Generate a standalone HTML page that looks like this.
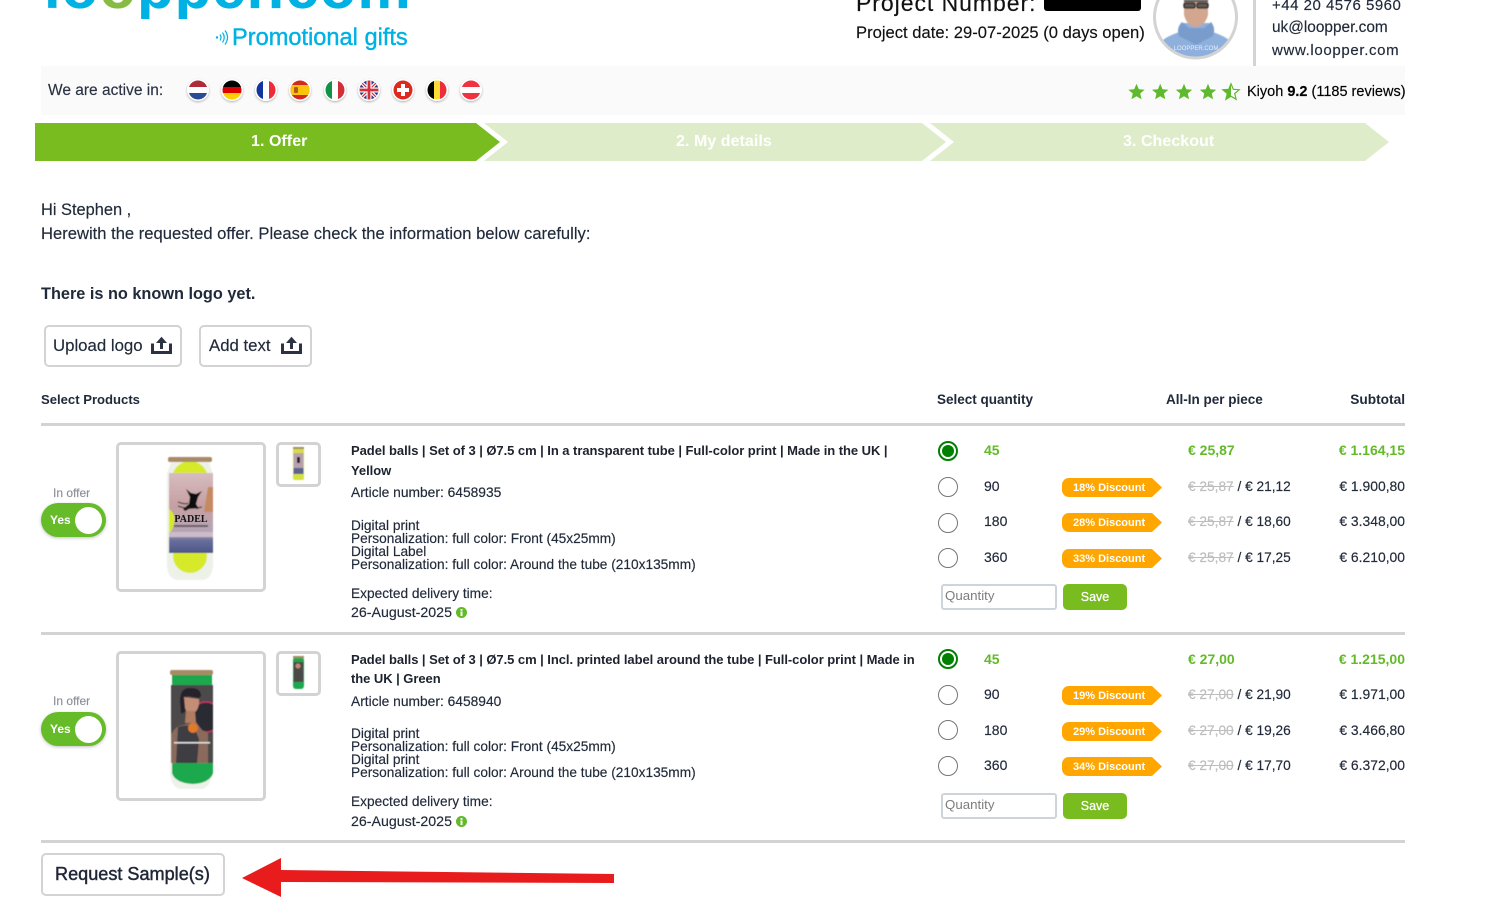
<!DOCTYPE html>
<html lang="en"><head><meta charset="utf-8"><title>Offer</title>
<style>
html,body{margin:0;padding:0;background:#fff;width:1503px;height:902px;overflow:hidden}
body{position:relative;font-family:"Liberation Sans",sans-serif;color:#212a3a;font-size:14px}
.t{position:absolute;white-space:nowrap;line-height:18px;-webkit-text-stroke:.15px currentColor}
.b{font-weight:700;-webkit-text-stroke:0}.r{text-align:right}
.box{position:absolute;box-sizing:border-box;border:3px solid #d3d3d3;border-radius:5px;background:#fff}
.hr{position:absolute;left:41px;width:1364px;height:3px;background:#d3d3d3}
.radio{position:absolute;left:938px;width:20px;height:20px;box-sizing:border-box;border:1.5px solid #767676;border-radius:50%;background:#fff}
.radio.on{border:2px solid #008000}
.radio.on:after{content:"";position:absolute;left:2px;top:2px;width:12px;height:12px;border-radius:50%;background:#008000}
.badge{position:absolute;left:1062px;width:100px;height:19px;background:#ffa600;color:#fff;font-weight:700;font-size:11px;line-height:20px;text-indent:11px;border-radius:7px 0 0 7px;clip-path:polygon(0 0,90% 0,100% 50%,90% 100%,0 100%)}
.green{color:#62ba29;font-weight:700;font-size:14px;-webkit-text-stroke:0}
.p{font-size:13.700px}
.old{color:#bdbdbd;text-decoration:line-through}
.q{position:absolute;left:941px;width:116px;height:26px;box-sizing:border-box;border:2px solid #ced4da;border-radius:3px;background:#fff;color:#7d7d7d;font-size:13.300px;line-height:20px;padding-left:2px}
.save{position:absolute;left:1063px;width:64px;height:26px;background:#78bc20;border-radius:5px;color:#fff;font-size:12.500px;-webkit-text-stroke:.25px #fff;line-height:26px;text-align:center}
.tog{position:absolute;left:41px;width:65px;height:34px;background:#66bb29;border-radius:17px;box-shadow:0 1px 3px rgba(0,0,0,.25)}
.tog:after{content:"";position:absolute;left:34px;top:4px;width:27px;height:27px;background:#fff;border-radius:50%}
.tog span{position:absolute;left:9px;top:8px;color:#fff;font-size:12px;font-weight:700;line-height:18px}
.step{font-size:16px;color:#fff;letter-spacing:.05px;top:133px}
.ti{font-size:13px;color:#1c222e;letter-spacing:-.05px}
svg{position:absolute;overflow:visible}
</style></head><body>

<!-- logo -->
<div class="t" style="left:44px;top:-42px;font-size:60px;line-height:60px;font-weight:700;color:#00b2e3;letter-spacing:1px">lo<span style="color:#86bc42">o</span>pper.com</div>
<div style="position:absolute;left:0;top:19px;width:520px;height:47px;background:#fff"></div>
<div class="t" style="left:232px;top:25px;font-size:23.600px;line-height:26px;color:#00b2e3;-webkit-text-stroke:.4px #00b2e3">Promotional gifts</div>
<svg style="left:215px;top:29px" width="14" height="17" fill="none" stroke="#00b2e3" stroke-width="1.2"><circle cx="2" cy="8.500" r="1.200" fill="#00b2e3" stroke="none"/><path d="M5 5.500q2 3 0 6M7.500 3.500q3.500 5 0 10M10 1.500q5 7 0 14"/></svg>

<!-- header right -->
<div class="t" style="left:856px;top:-8px;font-size:23px;line-height:22px;color:#111;letter-spacing:.95px">Project Number:</div>
<div style="position:absolute;left:1044px;top:0;width:97px;height:11px;background:#000;border-radius:0 0 3px 3px"></div>
<div class="t" style="left:856px;top:23px;font-size:16.600px;line-height:20px;color:#111">Project date: 29-07-2025 (0 days open)</div>
<svg style="left:1153px;top:0" width="86" height="60">
<defs><clipPath id="av"><circle cx="42.500" cy="17" r="40"/></clipPath><filter id="bl"><feGaussianBlur stdDeviation=".5"/></filter></defs>
<g clip-path="url(#av)"><rect width="86" height="60" fill="#fff"/>
<g filter="url(#bl)">
<path d="M6 60V44q6-8 24-13l0-8h26l0 8q18 5 24 13V60z" fill="#8fb0dc"/>
<path d="M26 36q-3-8 3-14l7 6h15l7-6q5 6 2 14l-17 9z" fill="#7a9ccc"/>
<path d="M31 0h24v15q-3 11-12 12-9-1-12-12z" fill="#d3a68f"/>
<rect x="31" y="0" width="24" height="2" fill="#555"/>
<rect x="31" y="3" width="11" height="5" rx="1.500" fill="#5f5a55" stroke="#222" stroke-width="1.300"/><rect x="44" y="3" width="11" height="5" rx="1.500" fill="#5f5a55" stroke="#222" stroke-width="1.300"/>
</g>
<text x="43" y="50" font-size="6" fill="#e6eef8" text-anchor="middle">LOOPPER.COM</text>
</g>
<circle cx="42.500" cy="17" r="41" fill="none" stroke="#d3d3d3" stroke-width="3"/></svg>
<div style="position:absolute;left:1253px;top:0;width:3px;height:66px;background:#d3d3d3"></div>
<div class="t" style="left:1272px;top:-3px;font-size:15px;line-height:18px;letter-spacing:.5px">+44 20 4576 5960</div>
<div class="t" style="left:1272px;top:19px;font-size:15.400px;line-height:18px">uk@loopper.com</div>
<div class="t" style="left:1272px;top:42px;font-size:15px;line-height:18px;letter-spacing:.65px">www.loopper.com</div>

<!-- active bar -->
<div style="position:absolute;left:41px;top:66px;width:1364px;height:49px;background:#fafafa"></div>
<div class="t" style="left:48px;top:82px;font-size:15.500px;color:#2a3242">We are active in:</div>
<svg style="left:0;top:0" width="500" height="120">
<defs><clipPath id="fc"><circle r="9.500"/></clipPath><filter id="fs" x="-30%" y="-30%" width="160%" height="160%"><feDropShadow dx="0" dy="1" stdDeviation="1" flood-opacity=".3"/></filter></defs>
<g transform="translate(198 90)"><circle r="11" fill="#fff" filter="url(#fs)"/><g clip-path="url(#fc)"><rect x="-10" y="-10" width="20" height="7" fill="#ae2c3a"/><rect x="-10" y="-3" width="20" height="6" fill="#fff"/><rect x="-10" y="3" width="20" height="7" fill="#2a4c94"/></g></g>
<g transform="translate(232 90)"><circle r="11" fill="#fff" filter="url(#fs)"/><g clip-path="url(#fc)"><rect x="-10" y="-10" width="20" height="7" fill="#000"/><rect x="-10" y="-3" width="20" height="6" fill="#dd0000"/><rect x="-10" y="3" width="20" height="7" fill="#ffce00"/></g></g>
<g transform="translate(266 90)"><circle r="11" fill="#fff" filter="url(#fs)"/><g clip-path="url(#fc)"><rect x="-10" y="-10" width="7" height="20" fill="#14359c"/><rect x="-3" y="-10" width="6" height="20" fill="#fff"/><rect x="3" y="-10" width="7" height="20" fill="#ef2b3a"/></g></g>
<g transform="translate(300 90)"><circle r="11" fill="#fff" filter="url(#fs)"/><g clip-path="url(#fc)"><rect x="-10" y="-10" width="20" height="20" fill="#d5281c"/><rect x="-10" y="-5" width="20" height="10" fill="#fcc30b"/><rect x="-6" y="-3" width="4" height="6" rx="1" fill="#b5561f"/></g></g>
<g transform="translate(335 90)"><circle r="11" fill="#fff" filter="url(#fs)"/><g clip-path="url(#fc)"><rect x="-10" y="-10" width="7" height="20" fill="#0f9447"/><rect x="-3" y="-10" width="6" height="20" fill="#fff"/><rect x="3" y="-10" width="7" height="20" fill="#d12f38"/></g></g>
<g transform="translate(369 90)"><circle r="11" fill="#fff" filter="url(#fs)"/><g clip-path="url(#fc)"><rect x="-10" y="-10" width="20" height="20" fill="#2b3c86"/><path d="M-10-10L10 10M10-10L-10 10" stroke="#fff" stroke-width="3.500"/><path d="M-10-10L10 10M10-10L-10 10" stroke="#d2303d" stroke-width="1.200"/><path d="M0-10V10M-10 0H10" stroke="#fff" stroke-width="5"/><path d="M0-10V10M-10 0H10" stroke="#d2303d" stroke-width="2.800"/></g></g>
<g transform="translate(403 90)"><circle r="11" fill="#fff" filter="url(#fs)"/><g clip-path="url(#fc)"><rect x="-10" y="-10" width="20" height="20" fill="#dc2a20"/><path d="M-2-6H2V-2H6V2H2V6H-2V2H-6V-2H-2z" fill="#fff"/></g></g>
<g transform="translate(437 90)"><circle r="11" fill="#fff" filter="url(#fs)"/><g clip-path="url(#fc)"><rect x="-10" y="-10" width="7" height="20" fill="#000"/><rect x="-3" y="-10" width="6" height="20" fill="#fbdc36"/><rect x="3" y="-10" width="7" height="20" fill="#ee2d3a"/></g></g>
<g transform="translate(471 90)"><circle r="11" fill="#fff" filter="url(#fs)"/><g clip-path="url(#fc)"><rect x="-10" y="-10" width="20" height="7" fill="#ef3340"/><rect x="-10" y="-3" width="20" height="6" fill="#fff"/><rect x="-10" y="3" width="20" height="7" fill="#ef3340"/></g></g>
</svg>
<svg style="left:1125px;top:82px" width="120" height="20">
<defs><path id="st" d="M0-8.200L2.300-2.700 8.200-2.300 3.700 1.500 5.100 7.300 0 4.200-5.100 7.300-3.700 1.500-8.200-2.300-2.300-2.700z"/></defs>
<use href="#st" x="11.500" y="10" fill="#5fb92c"/><use href="#st" x="35.200" y="10" fill="#5fb92c"/><use href="#st" x="59" y="10" fill="#5fb92c"/><use href="#st" x="83" y="10" fill="#5fb92c"/>
<use href="#st" x="106" y="10" fill="#fff" stroke="#5fb92c" stroke-width="1.200"/><path d="M106 1.800L103.700 7.300 97.800 7.700 102.300 11.500 100.900 17.300 106 14.200z" fill="#5fb92c"/></svg>
<div class="t" style="left:1247px;top:83px;font-size:14.500px;color:#000">Kiyoh <b>9.2</b> (1185 reviews)</div>

<!-- steps -->
<svg style="left:0;top:0" width="1503" height="170">
<polygon points="35,123 476,123 500,142 476,161 35,161" fill="#78bc20"/>
<polygon points="484,123 922,123 946,142 922,161 484,161 508,142" fill="#dfecc9"/>
<polygon points="930,123 1365,123 1389,142 1365,161 930,161 954,142" fill="#dfecc9"/>
</svg>
<div class="t b step" style="left:251px">1. Offer</div>
<div class="t b step" style="left:676px">2. My details</div>
<div class="t b step" style="left:1123px">3. Checkout</div>

<!-- intro -->
<div class="t" style="left:41px;top:201px;font-size:16.400px">Hi Stephen ,</div>
<div class="t" style="left:41px;top:225px;font-size:16.600px">Herewith the requested offer. Please check the information below carefully:</div>
<div class="t b" style="left:41px;top:285px;font-size:16.300px">There is no known logo yet.</div>

<!-- buttons -->
<div class="box" style="left:44px;top:325px;width:138px;height:42px;border-width:2px"></div>
<div class="t" style="left:53px;top:337px;font-size:16.800px">Upload logo</div>
<svg style="left:150px;top:336px" width="24" height="20"><path d="M2.500 7.500V16.500H20.500V7.500M11.500 6V13" fill="none" stroke="#2b3243" stroke-width="3"/><polygon points="6,7 11.500,.7 17,7" fill="#2b3243"/></svg>
<div class="box" style="left:199px;top:325px;width:113px;height:42px;border-width:2px"></div>
<div class="t" style="left:209px;top:337px;font-size:16.800px">Add text</div>
<svg style="left:280px;top:336px" width="24" height="20"><path d="M2.500 7.500V16.500H20.500V7.500M11.500 6V13" fill="none" stroke="#2b3243" stroke-width="3"/><polygon points="6,7 11.500,.7 17,7" fill="#2b3243"/></svg>

<!-- table head -->
<div class="t b" style="left:41px;top:391px;font-size:13.100px">Select Products</div>
<div class="t b" style="left:937px;top:391px;font-size:13.500px">Select quantity</div>
<div class="t b" style="left:1166px;top:391px;font-size:13.500px">All-In per piece</div>
<div class="t b r" style="right:98px;top:391px;font-size:13.700px">Subtotal</div>
<div class="hr" style="top:423px"></div>

<!-- product 1 -->
<div class="t" style="left:53px;top:484px;font-size:12px;color:#8a8f98">In offer</div>
<div class="tog" style="top:503px"><span>Yes</span></div>
<div class="box" style="left:116px;top:442px;width:150px;height:150px"></div>
<svg style="left:116px;top:442px" width="150" height="150">
<defs><linearGradient id="p1" x1="0" y1="0" x2="0" y2="1"><stop offset="0" stop-color="#d6bcc0"/><stop offset=".4" stop-color="#c6a0a2"/><stop offset=".76" stop-color="#b3a5b8"/><stop offset=".84" stop-color="#6a6f9c"/><stop offset="1" stop-color="#4d5588"/></linearGradient>
<filter id="b2"><feGaussianBlur stdDeviation=".5"/></filter></defs>
<g filter="url(#b2)">
<path d="M55 20h38l4 12v90q0 14-10 16h-26q-10-2-10-16V32z" fill="#eef1e8"/>
<circle cx="74" cy="37" r="18" fill="#d6ea2a"/><circle cx="74" cy="114" r="17" fill="#d6ea2a"/>
<rect x="52" y="15" width="44" height="5" rx="2" fill="#a88a66"/>
<rect x="53" y="31" width="44" height="80" fill="url(#p1)"/>
<path d="M92 45h5v25h-9z" fill="#c68a62"/>
<path d="M53 67q7 5 5 14-2 9-5 10z" fill="#d6ea2a"/>
<path d="M70 47l5 4 5 1 6-3-4 6-2 7 3 5-8-1-6 3-2-2 6-5 1-7z" fill="#111"/>
<path d="M62 64q10 4 24 1M62 60q8 3 10 1" stroke="#222" fill="none" stroke-width="1"/>
<rect x="58" y="83" width="34" height="2" fill="#6c5a66"/>
<rect x="53" y="90" width="44" height="5" fill="#cdbcc8"/>
</g>
<text x="75" y="80" font-size="10" font-weight="700" font-family="Liberation Serif,serif" text-anchor="middle" fill="#111">PADEL</text>
</svg>
<div class="box" style="left:276px;top:442px;width:45px;height:45px"></div>
<svg style="left:276px;top:442px" width="45" height="45"><g filter="url(#b2)"><rect x="17" y="6" width="11" height="32" rx="2" fill="#d4e03c"/><rect x="17.500" y="11" width="10" height="21" fill="#b9a0ae"/><rect x="17.500" y="26" width="10" height="6" fill="#5b6391"/><rect x="17" y="5" width="11" height="2" fill="#a88a66"/><rect x="21" y="15" width="3" height="6" fill="#222"/></g></svg>

<div class="t b ti" style="left:351px;top:442px">Padel balls | Set of 3 | Ø7.5 cm | In a transparent tube | Full-color print | Made in the UK |</div>
<div class="t b ti" style="left:351px;top:462px">Yellow</div>
<div class="t" style="left:351px;top:484px;font-size:13.800px">Article number: 6458935</div>
<div class="t" style="left:351px;top:519px;font-size:13.700px;line-height:13px">Digital print<br>Personalization: full color: Front (45x25mm)<br>Digital Label<br>Personalization: full color: Around the tube (210x135mm)</div>
<div class="t" style="left:351px;top:585px;font-size:13.700px">Expected delivery time:</div>
<div class="t" style="left:351px;top:604px;font-size:14.200px">26-August-2025</div>
<svg style="left:456px;top:607px" width="11" height="11"><circle cx="5.500" cy="5.500" r="5.500" fill="#62ba29"/><rect x="4.500" y="4.500" width="2" height="4.500" fill="#fff"/><rect x="4.500" y="2" width="2" height="1.800" fill="#fff"/></svg>

<div class="radio on" style="top:441px"></div>
<div class="t green" style="left:984px;top:441px">45</div>
<div class="t green" style="left:1188px;top:441px">€ 25,87</div>
<div class="t green r" style="right:98px;top:441px">€ 1.164,15</div>

<div class="radio" style="top:477px"></div><div class="t" style="left:984px;top:477px">90</div>
<div class="badge" style="top:478px">18% Discount</div>
<div class="t p" style="left:1188px;top:478px"><span class="old">€ 25,87</span> / € 21,12</div>
<div class="t r" style="right:98px;top:477px;font-size:13.900px">€ 1.900,80</div>

<div class="radio" style="top:513px"></div><div class="t" style="left:984px;top:512px">180</div>
<div class="badge" style="top:513px">28% Discount</div>
<div class="t p" style="left:1188px;top:513px"><span class="old">€ 25,87</span> / € 18,60</div>
<div class="t r" style="right:98px;top:512px;font-size:13.900px">€ 3.348,00</div>

<div class="radio" style="top:548px"></div><div class="t" style="left:984px;top:548px">360</div>
<div class="badge" style="top:549px">33% Discount</div>
<div class="t p" style="left:1188px;top:549px"><span class="old">€ 25,87</span> / € 17,25</div>
<div class="t r" style="right:98px;top:548px;font-size:13.900px">€ 6.210,00</div>

<div class="q" style="top:584px">Quantity</div>
<div class="save" style="top:584px">Save</div>

<div class="hr" style="top:632px"></div>

<!-- product 2 -->
<div class="t" style="left:53px;top:692px;font-size:12px;color:#8a8f98">In offer</div>
<div class="tog" style="top:712px"><span>Yes</span></div>
<div class="box" style="left:116px;top:651px;width:150px;height:150px"></div>
<svg style="left:116px;top:651px" width="150" height="150">
<defs><clipPath id="lb"><rect x="55" y="34" width="42" height="78"/></clipPath></defs>
<g filter="url(#b2)">
<path d="M56 24h40v100q-2 12-10 14h-22q-8-2-10-14z" fill="#eef1ea"/>
<path d="M56 22h40v14H56z" fill="#1ea84e"/>
<path d="M56 110h41v12q-3 10-20 11-18-1-21-11z" fill="#1ea84e"/>
<rect x="54" y="19" width="43" height="5" rx="2" fill="#a88a66"/>
<rect x="55" y="34" width="42" height="78" fill="#4c4a4a"/>
<g clip-path="url(#lb)">
<circle cx="90" cy="66" r="15" fill="#2a2a30" stroke="#c4306a" stroke-width="1.500"/>
<path d="M55 112V84q4-9 12-10l13-3 6 8 6 3v30z" fill="#8a6a5c"/>
<path d="M62 76q8-3 16 0l5 12-2 24H60z" fill="#3c3c42"/>
<path d="M64 50q0-14 11-13 10 0 10 8l-2 2-12-2-2 16-4 2z" fill="#25202a"/>
<path d="M68 46l15 2q1 10-6 15-6 0-8-6z" fill="#c48d74"/>
<path d="M70 60h9l1 12h-11z" fill="#b07b62"/>
<circle cx="77" cy="77" r="5" fill="#e0792a"/>
<rect x="58" y="91" width="36" height="1.500" fill="#ddd"/>
</g>
</g>
</svg>
<div class="box" style="left:276px;top:651px;width:45px;height:45px"></div>
<svg style="left:276px;top:651px" width="45" height="45"><g filter="url(#b2)"><rect x="17" y="6" width="11" height="32" rx="3" fill="#1fa84f"/><rect x="17.500" y="11" width="10" height="20" fill="#4a4a4a"/><circle cx="22" cy="15" r="2.500" fill="#c98a70"/><rect x="17" y="5" width="11" height="2" fill="#a88a66"/></g></svg>

<div class="t b ti" style="left:351px;top:651px">Padel balls | Set of 3 | Ø7.5 cm | Incl. printed label around the tube | Full-color print | Made in</div>
<div class="t b ti" style="left:351px;top:670px">the UK | Green</div>
<div class="t" style="left:351px;top:693px;font-size:13.800px">Article number: 6458940</div>
<div class="t" style="left:351px;top:727px;font-size:13.700px;line-height:13px">Digital print<br>Personalization: full color: Front (45x25mm)<br>Digital print<br>Personalization: full color: Around the tube (210x135mm)</div>
<div class="t" style="left:351px;top:793px;font-size:13.700px">Expected delivery time:</div>
<div class="t" style="left:351px;top:813px;font-size:14.200px">26-August-2025</div>
<svg style="left:456px;top:816px" width="11" height="11"><circle cx="5.500" cy="5.500" r="5.500" fill="#62ba29"/><rect x="4.500" y="4.500" width="2" height="4.500" fill="#fff"/><rect x="4.500" y="2" width="2" height="1.800" fill="#fff"/></svg>

<div class="radio on" style="top:649px"></div>
<div class="t green" style="left:984px;top:650px">45</div>
<div class="t green" style="left:1188px;top:650px">€ 27,00</div>
<div class="t green r" style="right:98px;top:650px">€ 1.215,00</div>

<div class="radio" style="top:685px"></div><div class="t" style="left:984px;top:685px">90</div>
<div class="badge" style="top:686px">19% Discount</div>
<div class="t p" style="left:1188px;top:686px"><span class="old">€ 27,00</span> / € 21,90</div>
<div class="t r" style="right:98px;top:685px;font-size:13.900px">€ 1.971,00</div>

<div class="radio" style="top:720px"></div><div class="t" style="left:984px;top:721px">180</div>
<div class="badge" style="top:722px">29% Discount</div>
<div class="t p" style="left:1188px;top:722px"><span class="old">€ 27,00</span> / € 19,26</div>
<div class="t r" style="right:98px;top:721px;font-size:13.900px">€ 3.466,80</div>

<div class="radio" style="top:756px"></div><div class="t" style="left:984px;top:756px">360</div>
<div class="badge" style="top:757px">34% Discount</div>
<div class="t p" style="left:1188px;top:757px"><span class="old">€ 27,00</span> / € 17,70</div>
<div class="t r" style="right:98px;top:756px;font-size:13.900px">€ 6.372,00</div>

<div class="q" style="top:793px">Quantity</div>
<div class="save" style="top:793px">Save</div>

<div class="hr" style="top:840px"></div>

<!-- sample -->
<div class="box" style="left:41px;top:853px;width:184px;height:43px;border-width:2px"></div>
<div class="t" style="left:55px;top:865px;font-size:18.100px;line-height:18px;color:#1f2636;-webkit-text-stroke:.45px #1f2636">Request Sample(s)</div>
<svg style="left:240px;top:855px" width="380" height="47"><polygon points="2,23 41,3 41,15 374,19 374,28 41,27 41,42" fill="#e81c1c"/></svg>
</body></html>
